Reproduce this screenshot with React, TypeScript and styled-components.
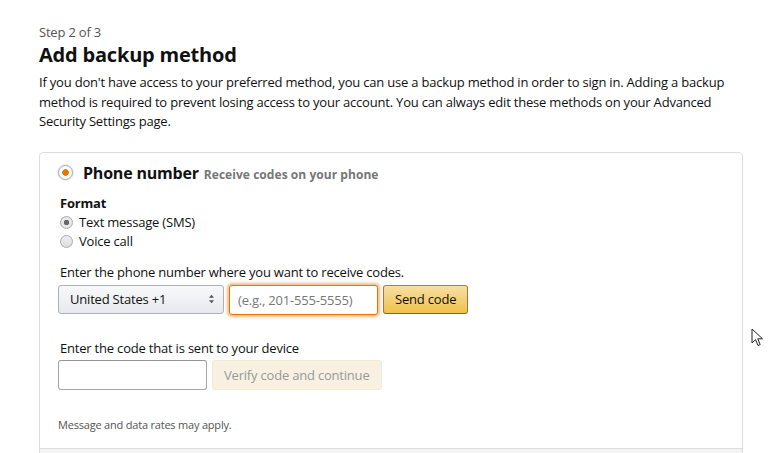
import styled, { createGlobalStyle } from 'styled-components'

const GlobalStyle = createGlobalStyle`
  html, body {
    margin: 0;
    padding: 0;
    background: #fff;
    overflow: hidden;
  }
  body {
    font-family: 'Open Sans', 'Noto Sans', Arial, sans-serif;
    font-size: 13px;
    line-height: 19px;
    letter-spacing: -0.2px;
    color: #111;
  }
`

const App = () => {
  return (
    <Page>
      <GlobalStyle />
      <StepLabel>Step 2 of 3</StepLabel>
      <Title>Add backup method</Title>
      <Intro>
        If you don't have access to your preferred method, you can use a backup method in order to
        sign in. Adding a backup method is required to prevent losing access to your account. You
        can always edit these methods on your Advanced Security Settings page.
      </Intro>

      <Card>
        <Section>
          <MethodHeader>
            <BigRadio $checked />
            <MethodTitle>Phone number</MethodTitle>
            <MethodHint>Receive codes on your phone</MethodHint>
          </MethodHeader>

          <Body>
            <FieldLabel>Format</FieldLabel>
            <Option>
              <SmallRadio $checked />
              Text message (SMS)
            </Option>
            <Option>
              <SmallRadio />
              Voice call
            </Option>

            <Prompt>Enter the phone number where you want to receive codes.</Prompt>
            <Row>
              <CountrySelect>
                United States +1
                <Arrows viewBox="0 0 8 12">
                  <path d="M4 1 L7 4.5 H1 Z" fill="#555" />
                  <path d="M4 11 L7 7.5 H1 Z" fill="#555" />
                </Arrows>
              </CountrySelect>
              <PhoneInput placeholder="(e.g., 201-555-5555)" />
              <YellowButton>Send code</YellowButton>
            </Row>

            <Prompt $spaced>Enter the code that is sent to your device</Prompt>
            <Row>
              <CodeInput />
              <DisabledButton disabled>Verify code and continue</DisabledButton>
            </Row>

            <Fine>Message and data rates may apply.</Fine>
          </Body>
        </Section>
        <NextSection />
      </Card>

      <Cursor viewBox="0 0 12 19">
        <path
          d="M1 1 L1 15 L4.5 11.6 L7 17.5 L9.2 16.6 L6.8 10.8 L11.5 10.8 Z"
          fill="#fff"
          stroke="#222"
          strokeWidth="1"
          strokeLinejoin="round"
        />
      </Cursor>
    </Page>
  )
}

export default App

const Page = styled.div({
  position: 'relative',
  width: 770,
  height: 453,
  overflow: 'hidden',
  padding: '23px 27px 0 39px',
  boxSizing: 'border-box'
})
const StepLabel = styled.div({
  fontSize: 13,
  color: '#555',
  lineHeight: '18px'
})
const Title = styled.h1({
  margin: '0 0 4px',
  fontSize: 20,
  letterSpacing: '-0.2px',
  lineHeight: '28px',
  fontWeight: 700,
  color: '#111'
})
const Intro = styled.p({
  margin: 0,
  fontSize: 13,
  letterSpacing: '-0.2px',
  lineHeight: '19.5px'
})
const Card = styled.div({
  marginTop: 20,
  border: '1px solid #ddd',
  borderRadius: 4,
  overflow: 'hidden'
})
const Section = styled.div({
  padding: '8px 18px 14px'
})
const NextSection = styled.div({
  height: 20,
  borderTop: '1px solid #ddd',
  background: '#f3f3f3'
})
const MethodHeader = styled.div({
  display: 'flex',
  alignItems: 'baseline',
  gap: 5
})
const BigRadio = styled.span<{ $checked?: boolean }>`
  align-self: center;
  width: 15px;
  height: 15px;
  margin-right: 5px;
  border: 1px solid #a6a6a6;
  border-radius: 50%;
  box-sizing: border-box;
  background: ${(p) =>
    p.$checked ? 'radial-gradient(circle, #e77600 0 3px, #fff 3.5px)' : '#fff'};
  box-shadow: 0 0 0 1px #eee;
`
const MethodTitle = styled.span({
  fontSize: 16,
  fontWeight: 700,
  lineHeight: '24px'
})
const MethodHint = styled.span({
  fontSize: 12,
  fontWeight: 700,
  letterSpacing: '0.05px',
  color: '#767676'
})
const Body = styled.div({
  paddingLeft: 2,
  marginTop: 9
})
const FieldLabel = styled.div({
  fontWeight: 700,
  fontSize: 13,
  lineHeight: '19px'
})
const Option = styled.label({
  display: 'flex',
  alignItems: 'center',
  gap: 6,
  lineHeight: '19px'
})
const SmallRadio = styled.span<{ $checked?: boolean }>`
  width: 13px;
  height: 13px;
  border: 1px solid #aaa;
  border-radius: 50%;
  box-sizing: border-box;
  background: ${(p) =>
    p.$checked
      ? 'radial-gradient(circle, #666 0 2.5px, #e6e6e6 3px)'
      : 'linear-gradient(#eee, #ddd)'};
`
const Prompt = styled.div<{ $spaced?: boolean }>`
  margin-top: ${(p) => (p.$spaced ? '24px' : '12px')};
  margin-bottom: ${(p) => (p.$spaced ? '2px' : '3px')};
  line-height: 19px;
`
const Row = styled.div({
  display: 'flex',
  gap: 5,
  marginLeft: -2
})
const CountrySelect = styled.div({
  width: 166,
  height: 29,
  boxSizing: 'border-box',
  display: 'flex',
  alignItems: 'center',
  justifyContent: 'space-between',
  padding: '0 8px 0 11px',
  border: '1px solid #adb1b8',
  borderRadius: 3,
  background: 'linear-gradient(#f7f8fa, #e7e9ec)',
  color: '#111'
})
const Arrows = styled.svg({
  width: 7,
  height: 10
})
const inputBase = {
  height: 30,
  boxSizing: 'border-box' as const,
  borderRadius: 3,
  padding: '0 8px',
  fontFamily: 'inherit',
  fontSize: 13,
  letterSpacing: '-0.2px',
  background: '#fff',
  outline: 'none'
}
const PhoneInput = styled.input({
  ...inputBase,
  width: 149,
  border: '1px solid #e77600',
  boxShadow: '0 0 3px 2px rgba(228,121,17,0.5)',
  '&::placeholder': {
    color: '#777'
  }
})
const CodeInput = styled.input({
  ...inputBase,
  width: 149,
  border: '1px solid #a6a6a6',
  borderTopColor: '#949494'
})
const YellowButton = styled.button({
  height: 29,
  padding: '0 11px',
  fontFamily: 'inherit',
  fontSize: 13,
  letterSpacing: '-0.2px',
  color: '#111',
  border: '1px solid #a88734',
  borderColor: '#a88734 #9c7e31 #846a29',
  borderRadius: 3,
  background: 'linear-gradient(#f7dfa5, #f0c14b)'
})
const DisabledButton = styled.button({
  height: 30,
  padding: '0 11px',
  fontFamily: 'inherit',
  fontSize: 13,
  letterSpacing: '-0.2px',
  color: '#999',
  border: '1px solid #f2ead4',
  borderRadius: 3,
  background: '#f8f1e2'
})
const Fine = styled.div({
  marginTop: 25,
  fontSize: 11,
  color: '#555',
  marginLeft: -2
})
const Cursor = styled.svg({
  position: 'absolute',
  left: 751,
  top: 328,
  width: 12,
  height: 19
})
